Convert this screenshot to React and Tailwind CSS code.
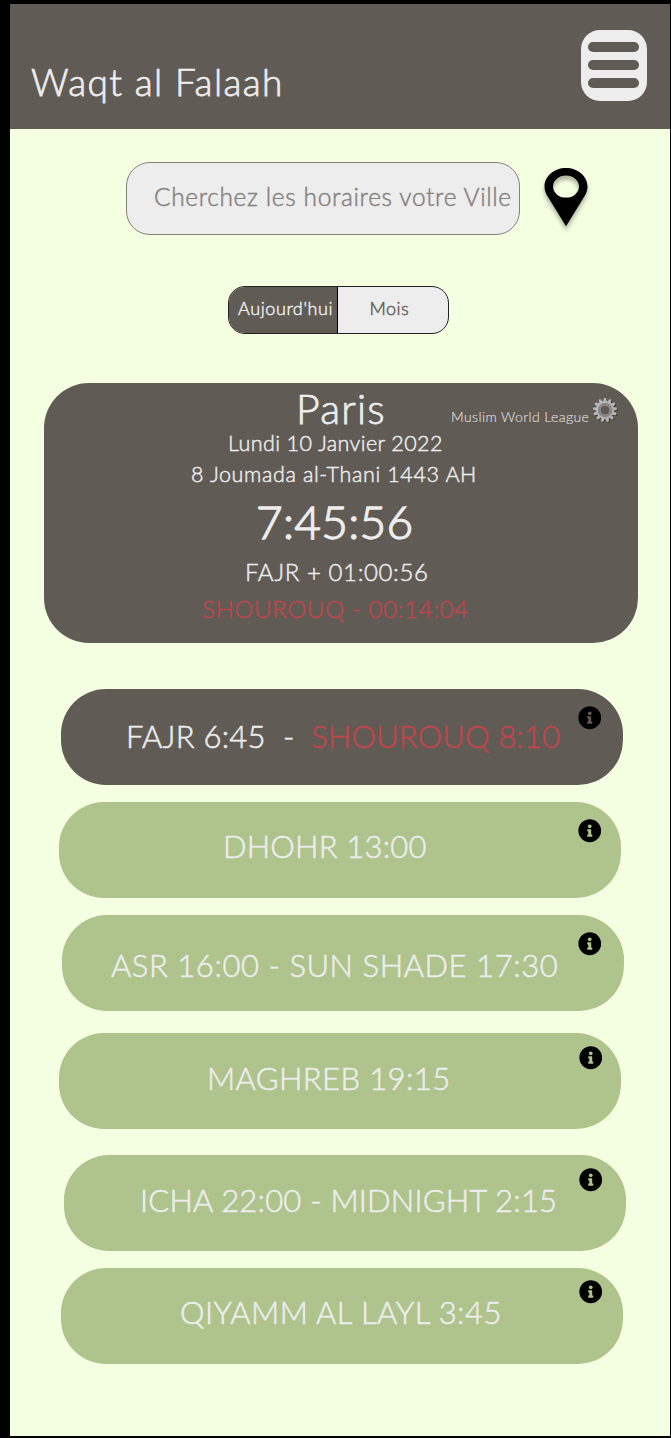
import { FaInfoCircle } from "react-icons/fa";

function MenuButton() {
  return (
    <button aria-label="Menu" className="mt-[26px] mr-[23px] flex h-[70.5px] w-[66.5px] flex-col items-center gap-2 rounded-[19px] bg-[#ededed] pt-3">
      <span className="h-[10px] w-[51px] rounded-full bg-[#615b56]" />
      <span className="h-[10px] w-[51px] rounded-full bg-[#615b56]" />
      <span className="h-[10px] w-[51px] rounded-full bg-[#615b56]" />
    </button>
  );
}

function PinIcon() {
  return (
    <svg viewBox="0 0 44 59" className="mt-[6px] h-[59px] w-[44px] overflow-visible drop-shadow-[0_4px_2px_rgba(0,0,0,0.3)]">
      <path
        fillRule="evenodd"
        d="M22 0C10 0 .5 8.2 .5 18.6C.5 22 1.5 25 3.4 28L22 58.2L40.6 28C42.5 25 43.5 22 43.5 18.6C43.5 8.2 34 0 22 0ZM22 7.6A13 11 0 0 1 22 29.6A13 11 0 0 1 22 7.6Z"
      />
    </svg>
  );
}

function GearIcon() {
  const teeth = Array.from({ length: 13 }, (_, i) => (i * 360) / 13);
  return (
    <svg viewBox="-13 -13 26 26" className="mt-[14px] ml-[2.5px] h-[26px] w-[26px] shrink-0 overflow-visible drop-shadow-[1px_1px_0.5px_rgba(0,0,0,0.35)]">
      <defs>
        <linearGradient id="gear" x1="0" y1="0" x2="1" y2="1">
          <stop offset="0" stopColor="#c4c4c4" />
          <stop offset="1" stopColor="#a2a2a2" />
        </linearGradient>
      </defs>
      {teeth.map((a) => (
        <path key={a} d="M-2 -8L-1 -12H1L2 -8Z" fill="#b6b6b6" transform={`rotate(${a})`} />
      ))}
      <circle r="9" fill="url(#gear)" />
      <circle r="6" fill="none" stroke="#858585" strokeWidth="2.4" />
      <circle r="4.6" fill="#5f5a56" />
    </svg>
  );
}

function Pill({ className, textClass, iconClass, children }) {
  return (
    <section className={`relative h-24 w-[562px] shrink-0 rounded-[45px] text-[31px] leading-none whitespace-pre [-webkit-text-stroke:0.55px] ${className}`}>
      <p className={textClass}>{children}</p>
      <FaInfoCircle className={`absolute size-[23.5px] text-black ${iconClass}`} />
    </section>
  );
}

export default function App() {
  return (
    <div className="h-[1438px] w-[671px] bg-black pt-1 pr-px pb-0.5 pl-2.5 font-['Lato','Liberation_Sans',sans-serif] font-light text-[#ededed]">
      <div className="flex h-[1432px] flex-col overflow-hidden bg-[#f4ffe2] [-webkit-text-stroke:0.45px]">
        <header className="flex h-[125px] shrink-0 justify-between bg-[#615b56]">
          <h1 className="pt-[59px] pl-[21px] text-[37px] leading-none tracking-[1.4px] whitespace-nowrap [-webkit-text-stroke:0.75px]">Waqt al Falaah</h1>
          <MenuButton />
        </header>

        <div className="mt-[33px] ml-[116px] flex shrink-0">
          <div className="mr-[23.5px] h-[73px] w-[394px] rounded-[24px] border border-[#85817d] bg-[#ededed] pt-[22px] pl-[27px] text-[24.5px] leading-none tracking-[0.63px] whitespace-nowrap text-[#85817d]">
            Cherchez les horaires votre Ville
          </div>
          <PinIcon />
        </div>

        <div className="mt-[51px] ml-[218px] flex h-12 w-[220.5px] shrink-0 overflow-hidden rounded-[17px] border border-[#222] bg-[#ededed] text-[18px] leading-[42px] whitespace-nowrap">
          <button className="flex w-[109px] items-start border-r border-black bg-[#615b56] pl-[9px] tracking-[0.6px]">Aujourd'hui</button>
          <button className="flex items-start pl-[31.5px] tracking-[0.5px] text-[#615b56]">Mois</button>
        </div>

        <section className="mt-[49px] ml-[34px] h-[260px] w-[594px] shrink-0 rounded-[45px] bg-[#615b56] whitespace-nowrap">
          <div className="flex h-12">
            <h2 className="box-content w-[155px] shrink-0 pt-px pl-[252px] text-[41px] leading-[50px] tracking-[1.2px] [-webkit-text-stroke:0.75px]">Paris</h2>
            <span className="mt-[24px] text-[14px] leading-5 tracking-[0.4px] text-[#d8d6d4] [-webkit-text-stroke:0.2px]">Muslim World League</span>
            <GearIcon />
          </div>
          <p className="pl-[184px] text-[21.5px] leading-6 tracking-[0.4px]">Lundi 10 Janvier 2022</p>
          <p className="mt-[7px] pl-[147px] text-[21.5px] leading-6 tracking-[0.62px]">8 Joumada al-Thani 1443 AH</p>
          <p className="mt-3 pl-[212px] text-[46px] leading-[48px] tracking-[0.3px] [-webkit-text-stroke:1.3px]">7:45:56</p>
          <p className="mt-3 pl-[201px] text-[24px] leading-7 tracking-[0.6px]">FAJR + 01:00:56</p>
          <p className="mt-[9px] pl-[158px] text-[24px] leading-7 tracking-[0.65px] text-[#bf4649]">SHOUROUQ - 00:14:04</p>
        </section>

        <Pill className="mt-[46px] ml-[51px] bg-[#615b56]" textClass="flex pt-[32px] pl-[65px]" iconClass="top-[17px] left-[516.5px]">
          <span className="w-[157px] tracking-[0.25px]">FAJR 6:45</span>
          <span className="w-[28px]">-</span>
          <span className="tracking-[0.15px] text-[#bf4649]">SHOUROUQ 8:10</span>
        </Pill>
        <Pill className="mt-[17px] ml-[49px] bg-[#aec48c]" textClass="pt-[29px] pl-[164px] tracking-[0.2px]" iconClass="top-[17px] left-[518.5px]">DHOHR 13:00</Pill>
        <Pill className="mt-[17px] ml-[52px] bg-[#aec48c]" textClass="pt-[35px] pl-[49px] tracking-[0.55px]" iconClass="top-[17px] left-[515.5px]">ASR 16:00 - SUN SHADE 17:30</Pill>
        <Pill className="mt-[22px] ml-[49px] bg-[#aec48c]" textClass="pt-[30px] pl-[148px] tracking-[0.4px]" iconClass="top-[13px] left-[519.5px]">MAGHREB 19:15</Pill>
        <Pill className="mt-[26px] ml-[54px] bg-[#aec48c]" textClass="pt-[30px] pl-[76px] tracking-[0.2px]" iconClass="top-[13px] left-[514.5px]">ICHA 22:00 - MIDNIGHT 2:15</Pill>
        <Pill className="mt-[17px] ml-[51px] bg-[#aec48c]" textClass="pt-[29px] pl-[119px] tracking-[0.43px]" iconClass="top-[12px] left-[517.5px]">QIYAMM AL LAYL 3:45</Pill>
      </div>
    </div>
  );
}
